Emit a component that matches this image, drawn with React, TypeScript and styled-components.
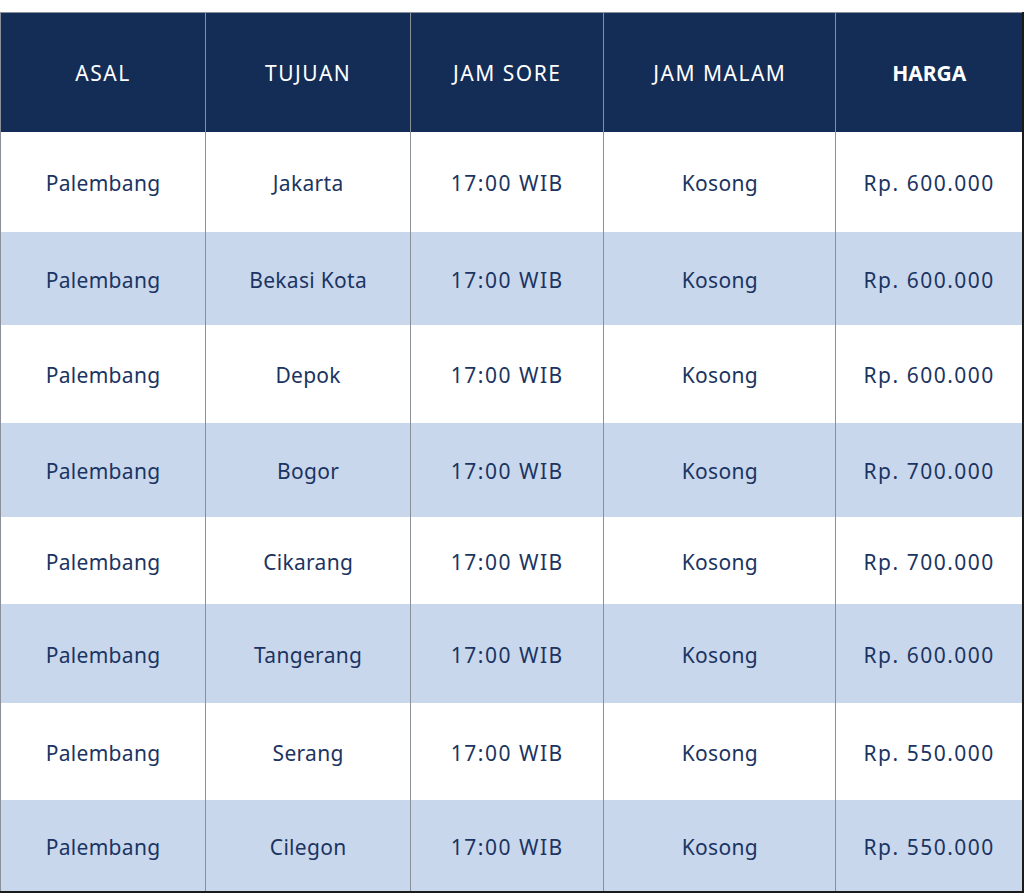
import styled, { createGlobalStyle } from "styled-components";

const GlobalStyle = createGlobalStyle`
  html, body {
    margin: 0;
    padding: 0;
    background: #ffffff;
  }
`;

const Page = styled.div`
  padding-top: 12px;
  width: 1024px;
`;

const Table = styled.table`
  width: 1024px;
  border-collapse: collapse;
  table-layout: fixed;
  font-family: "Noto Sans", "Open Sans", sans-serif;
  border-top: 1px solid #8a8f99;
  border-left: 1px solid #8a8f99;
  border-right: 2px solid #1a1a1a;
  border-bottom: 2px solid #1a1a1a;
`;

const HeadCell = styled.th<{ strong?: boolean }>`
  height: 119px;
  padding: 2px 0 0;
  box-sizing: border-box;
  background: #142d57;
  color: #ffffff;
  font-size: 21px;
  font-weight: ${({ strong }) => (strong ? 700 : 400)};
  letter-spacing: ${({ strong }) => (strong ? 0 : 1.5)}px;
  text-align: center;
  vertical-align: middle;
  border-right: 1px solid #8a8f99;
  &:last-child {
    border-right: none;
  }
`;

const Row = styled.tr<{ shaded: boolean; h: number }>`
  height: ${({ h }) => h}px;
  background: ${({ shaded }) => (shaded ? "#c9d7ed" : "#ffffff")};
`;

// numeric cells get a wider tracking, as the digits in the source are wider
const Cell = styled.td<{ numeric?: boolean }>`
  padding: 3px 0 0;
  color: #1b3461;
  font-size: 21px;
  letter-spacing: ${({ numeric }) => (numeric ? 1.5 : 0.3)}px;
  text-align: center;
  vertical-align: middle;
  border-right: 1px solid #8a8f99;
  &:last-child {
    border-right: none;
  }
`;

const columns = [
  { label: "ASAL", width: 205 },
  { label: "TUJUAN", width: 205 },
  { label: "JAM SORE", width: 193 },
  { label: "JAM MALAM", width: 232 },
  { label: "HARGA", width: 187, strong: true },
];

const routes = [
  { to: "Jakarta", price: "Rp. 600.000", h: 100 },
  { to: "Bekasi Kota", price: "Rp. 600.000", h: 93 },
  { to: "Depok", price: "Rp. 600.000", h: 98 },
  { to: "Bogor", price: "Rp. 700.000", h: 94 },
  { to: "Cikarang", price: "Rp. 700.000", h: 87 },
  { to: "Tangerang", price: "Rp. 600.000", h: 99 },
  { to: "Serang", price: "Rp. 550.000", h: 97 },
  { to: "Cilegon", price: "Rp. 550.000", h: 92 },
];

export default function App() {
  return (
    <Page>
      <GlobalStyle />
      <Table>
        <colgroup>
          {columns.map((c) => (
            <col key={c.label} style={{ width: c.width }} />
          ))}
        </colgroup>
        <thead>
          <tr>
            {columns.map((c) => (
              <HeadCell key={c.label} strong={c.strong}>
                {c.label}
              </HeadCell>
            ))}
          </tr>
        </thead>
        <tbody>
          {routes.map((r, i) => (
            <Row key={r.to} shaded={i % 2 === 1} h={r.h}>
              <Cell>Palembang</Cell>
              <Cell>{r.to}</Cell>
              <Cell numeric>17:00 WIB</Cell>
              <Cell>Kosong</Cell>
              <Cell numeric>{r.price}</Cell>
            </Row>
          ))}
        </tbody>
      </Table>
    </Page>
  );
}
